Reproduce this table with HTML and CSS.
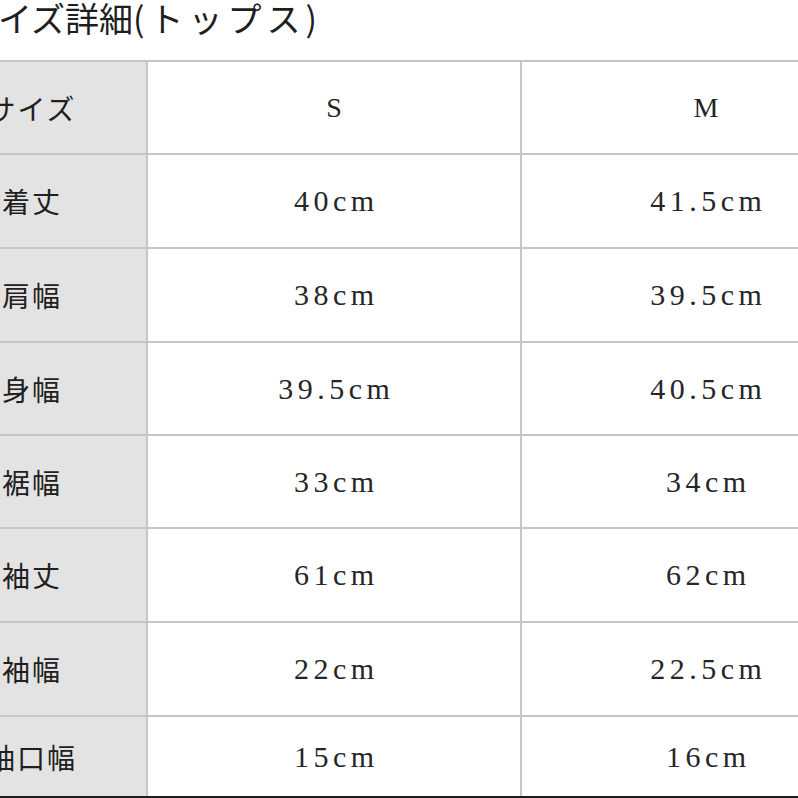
FILE: index.html
```html
<!DOCTYPE html>
<html lang="ja">
<head>
<meta charset="utf-8">
<title>サイズ詳細(トップス)</title>
<link rel="stylesheet" href="styles.css">
</head>
<body>
<div class="page">
  <h1 class="title">サイズ詳細<span class="paren">(トップス)</span></h1>
  <div class="sizes">
    <div class="cell label">サイズ</div>
    <div class="cell head">S</div>
    <div class="cell head">M</div>

    <div class="cell label">着丈</div>
    <div class="cell value">40cm</div>
    <div class="cell value">41.5cm</div>

    <div class="cell label">肩幅</div>
    <div class="cell value">38cm</div>
    <div class="cell value">39.5cm</div>

    <div class="cell label">身幅</div>
    <div class="cell value">39.5cm</div>
    <div class="cell value">40.5cm</div>

    <div class="cell label">裾幅</div>
    <div class="cell value">33cm</div>
    <div class="cell value">34cm</div>

    <div class="cell label">袖丈</div>
    <div class="cell value">61cm</div>
    <div class="cell value">62cm</div>

    <div class="cell label">袖幅</div>
    <div class="cell value">22cm</div>
    <div class="cell value">22.5cm</div>

    <div class="cell label">袖口幅</div>
    <div class="cell value">15cm</div>
    <div class="cell value">16cm</div>
  </div>
</div>
</body>
</html>
```

FILE: styles.css
```css
html, body {
  margin: 0;
  padding: 0;
  background: #ffffff;
  overflow: hidden;
}

.page {
  width: 798px;
  height: 798px;
  overflow: hidden;
  color: #222222;
  font-family: "Noto Sans CJK JP", "Liberation Serif", serif;
}

.title {
  margin: 0 0 0 -36px;
  height: 60px;
  font-size: 34px;
  line-height: 36px;
  font-weight: 400;
  white-space: nowrap;
  color: #1e1e1e;
}

.title .paren {
  letter-spacing: 5px;
}

.sizes {
  margin-left: -84px;
  width: 974px;
  display: grid;
  grid-template-columns: 230px 372px 368px;
  grid-template-rows: 91px 92px 92px 91px 91px 92px 92px 79px;
  gap: 2px;
  padding-top: 2px;
  background: #c6c6c6;
  border-bottom: 3px solid #1c1c1c;
}

.cell {
  display: flex;
  align-items: center;
  justify-content: center;
  background: #ffffff;
}

.label {
  background: #e3e3e3;
  font-family: "Noto Sans CJK JP", sans-serif;
  font-weight: 400;
  font-size: 28px;
  letter-spacing: 2px;
  padding-left: 2px;
  color: #202020;
}

.head {
  font-family: "Liberation Serif", serif;
  font-size: 28px;
  color: #222222;
}

.value {
  font-family: "Liberation Serif", serif;
  font-size: 30px;
  letter-spacing: 4.5px;
  padding-left: 4.5px;
  color: #262626;
}
```
